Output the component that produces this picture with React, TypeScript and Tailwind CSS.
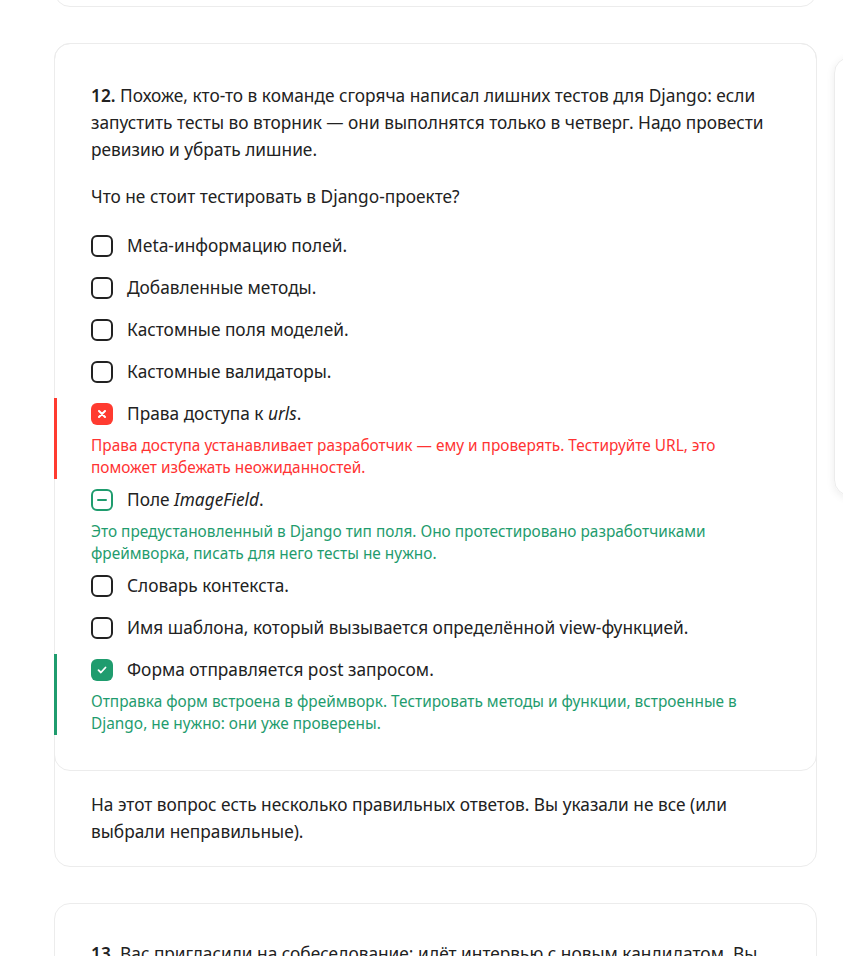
import React from "react";

type Status = "none" | "wrong" | "partial" | "right";

type Option = {
  label: React.ReactNode;
  status: Status;
  note?: string;
};

const options: Option[] = [
  { label: "Meta-информацию полей.", status: "none" },
  { label: "Добавленные методы.", status: "none" },
  { label: "Кастомные поля моделей.", status: "none" },
  { label: "Кастомные валидаторы.", status: "none" },
  {
    label: (
      <>
        Права доступа к <i>urls</i>.
      </>
    ),
    status: "wrong",
    note: "Права доступа устанавливает разработчик — ему и проверять. Тестируйте URL, это поможет избежать неожиданностей.",
  },
  {
    label: (
      <>
        Поле <i>ImageField</i>.
      </>
    ),
    status: "partial",
    note: "Это предустановленный в Django тип поля. Оно протестировано разработчиками фреймворка, писать для него тесты не нужно.",
  },
  { label: "Словарь контекста.", status: "none" },
  { label: "Имя шаблона, который вызывается определённой view-функцией.", status: "none" },
  {
    label: "Форма отправляется post запросом.",
    status: "right",
    note: "Отправка форм встроена в фреймворк. Тестировать методы и функции, встроенные в Django, не нужно: они уже проверены.",
  },
];

const Box = ({ status }: { status: Status }) => {
  if (status === "wrong")
    return (
      <span className="flex h-[22px] w-[22px] shrink-0 items-center justify-center rounded-[6px] bg-[#ff3b30]">
        <svg width="8" height="8" viewBox="0 0 8 8">
          <path d="M1 1l6 6M7 1l-6 6" stroke="#fff" strokeWidth="2" strokeLinecap="round" />
        </svg>
      </span>
    );
  if (status === "partial")
    return (
      <span className="flex h-[22px] w-[22px] shrink-0 items-center justify-center rounded-[6px] border-2 border-[#1f9c6e]">
        <span className="h-[2px] w-[10px] rounded bg-[#1f9c6e]" />
      </span>
    );
  if (status === "right")
    return (
      <span className="flex h-[22px] w-[22px] shrink-0 items-center justify-center rounded-[6px] bg-[#1f9c6e]">
        <svg width="10" height="8" viewBox="0 0 10 8">
          <path d="M1.5 4.2l2.4 2.3L8.5 1.5" stroke="#fff" strokeWidth="1.8" fill="none" strokeLinecap="round" strokeLinejoin="round" />
        </svg>
      </span>
    );
  return <span className="h-[22px] w-[22px] shrink-0 rounded-[6px] border-2 border-[#222]" />;
};

const Row = ({ opt }: { opt: Option }) => {
  if (!opt.note)
    return (
      <div className="flex items-center gap-[14px] py-2 leading-[26px]">
        <Box status={opt.status} />
        <span>{opt.label}</span>
      </div>
    );

  const bar =
    opt.status === "wrong"
      ? "border-[#ff3b30]"
      : opt.status === "right"
        ? "border-[#1f9c6e]"
        : "border-transparent";
  const noteColor = opt.status === "wrong" ? "text-[#ff3333]" : "text-[#1f9c6e]";

  return (
    <div className="pt-[5px]">
      <div className={`-ml-[37px] border-l-[3px] pl-[34px] pt-[3px] ${bar}`}>
        <div className="flex items-center gap-[14px] leading-[26px]">
          <Box status={opt.status} />
          <span>{opt.label}</span>
        </div>
        <p className={`mt-[8px] text-[15.4px] leading-[22px] ${noteColor}`}>{opt.note}</p>
      </div>
    </div>
  );
};

export default function App() {
  return (
    <div
      className="min-h-screen w-full overflow-hidden bg-white text-[17.3px] text-[#222]"
      style={{ fontFamily: '"Noto Sans", "Open Sans", sans-serif' }}
    >
      <div className="ml-[54px] flex items-start gap-[17px]">
        <div className="flex w-[763px] shrink-0 flex-col gap-9">
          <div className="-mt-[53px] h-[60px] rounded-[16px] border border-[#ececec]" />

          <div className="rounded-[16px] border border-[#ececec]">
            <div className="-mx-px -mt-px rounded-[16px] border border-[#ececec] px-9 pt-[38px] pb-[35px]">
              <p className="leading-[27px]">
                <b className="font-semibold">12.</b> Похоже, кто-то в команде сгоряча написал лишних тестов для Django: если запустить тесты во вторник — они выполнятся только в четверг. Надо провести ревизию и убрать лишние.
              </p>
              <p className="mt-5 leading-[27px]">Что не стоит тестировать в Django-проекте?</p>
              <div className="mt-[15px] flex flex-col">
                {options.map((o, i) => (
                  <Row key={i} opt={o} />
                ))}
              </div>
            </div>
            <p className="px-9 pt-[20px] pb-[21px] leading-[27px]">
              На этот вопрос есть несколько правильных ответов. Вы указали не все (или выбрали неправильные).
            </p>
          </div>

          <div className="rounded-[16px] border border-[#ececec] px-9 pt-9 pb-10">
            <p className="leading-[27px]">
              <b className="font-semibold">13.</b> Вас пригласили на собеседование: идёт интервью с новым кандидатом. Вы
            </p>
          </div>
        </div>

        <div className="mt-[57px] h-[439px] w-[300px] shrink-0 rounded-[16px] border border-[#ececec] shadow-[0_2px_8px_rgba(0,0,0,0.08)]" />
      </div>
    </div>
  );
}
